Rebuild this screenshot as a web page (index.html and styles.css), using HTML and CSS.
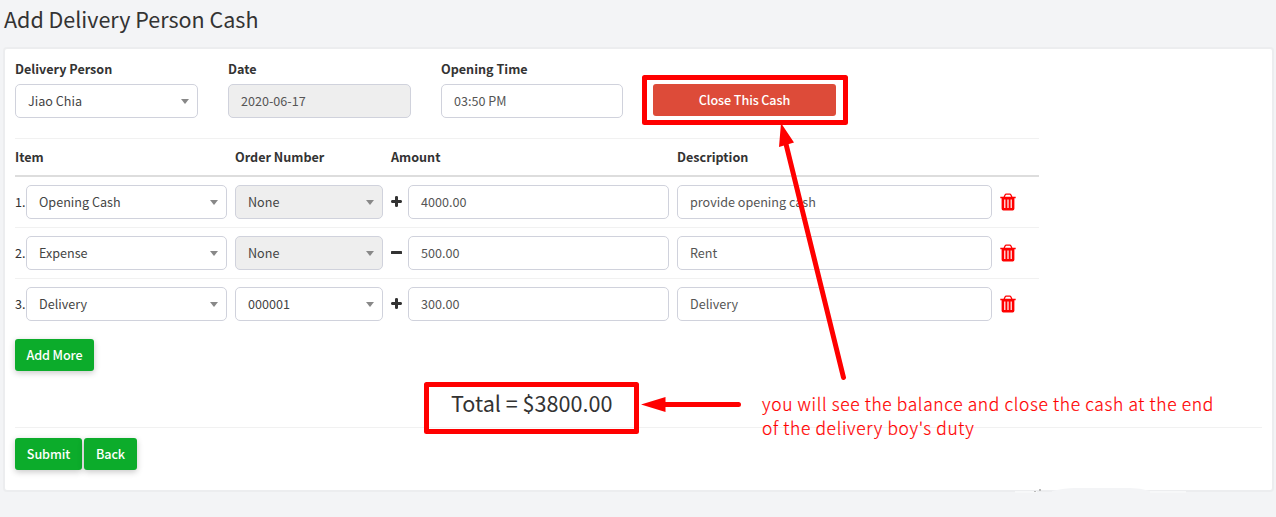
FILE: index.html
```
<!DOCTYPE html>
<html lang="en">
<head>
<meta charset="utf-8">
<title>Add Delivery Person Cash</title>
<link rel="stylesheet" href="styles.css">
</head>
<body>
<svg width="0" height="0" class="defs">
  <symbol id="trash" viewBox="0 0 16 18">
    <path d="M.3 4.500h15.400M4 4.200L5.200 1.800Q5.500 1.200 6.200 1.200H9.800Q10.500 1.200 10.800 1.800L12 4.200" fill="none" stroke="currentColor" stroke-width="1.300"/>
    <path fill="currentColor" fill-rule="evenodd" d="M1.600 4.500h12.800v11.200q0 1.700-1.700 1.700H3.300q-1.700 0-1.700-1.700ZM4.200 6.500v8.500h1.200V6.500ZM7.400 6.500v8.500h1.200V6.500ZM10.600 6.500v8.500h1.200V6.500Z"/>
  </symbol>
  <symbol id="plus" viewBox="0 0 11 11"><path d="M5.5 .6v9.800M.6 5.500h9.800" stroke="currentColor" stroke-width="3"/><path d="M5.5 1v9M1 5.500h9" stroke="currentColor" stroke-width="2" stroke-linecap="round"/></symbol>
  <symbol id="minus" viewBox="0 0 11 11"><rect y="4" width="11" height="3" rx=".6" fill="currentColor"/></symbol>
</svg>
<h1 class="title">Add Delivery Person Cash</h1>
<main class="card">
  <div class="fields">
    <div class="field"><label class="label">Delivery Person</label><div class="box select">Jiao Chia</div></div>
    <div class="field"><label class="label">Date</label><div class="box disabled value">2020-06-17</div></div>
    <div class="field"><label class="label">Opening Time</label><div class="box value">03:50 PM</div></div>
    <button class="btn danger">Close This Cash</button>
  </div>
  <section class="items">
    <div class="row head"><span>Item</span><span>Order Number</span><span>Amount</span><span>Description</span></div>
    <div class="row">
      <div class="cell"><span class="num">1.</span><div class="box select">Opening Cash</div></div>
      <div class="box select disabled">None</div>
      <div class="cell"><svg class="sign"><use href="#plus"/></svg><div class="box value">4000.00</div></div>
      <div class="box value">provide opening cash</div>
      <svg class="trash"><use href="#trash"/></svg>
    </div>
    <div class="row">
      <div class="cell"><span class="num">2.</span><div class="box select">Expense</div></div>
      <div class="box select disabled">None</div>
      <div class="cell"><svg class="sign"><use href="#minus"/></svg><div class="box value">500.00</div></div>
      <div class="box value">Rent</div>
      <svg class="trash"><use href="#trash"/></svg>
    </div>
    <div class="row">
      <div class="cell"><span class="num">3.</span><div class="box select">Delivery</div></div>
      <div class="box select">000001</div>
      <div class="cell"><svg class="sign"><use href="#plus"/></svg><div class="box value">300.00</div></div>
      <div class="box value">Delivery</div>
      <svg class="trash"><use href="#trash"/></svg>
    </div>
  </section>
  <button class="btn add">Add More</button>
  <div class="total">Total = $3800.00</div>
  <div class="actions"><button class="btn submit">Submit</button><button class="btn back">Back</button></div>
</main>
<svg class="notes" viewBox="0 0 1276 517">
  <g fill="none" stroke="#f00" stroke-width="5" stroke-linejoin="round" stroke-linecap="round">
    <rect x="644.5" y="77.5" width="201" height="45"/>
    <rect x="426.5" y="384.5" width="210" height="47"/>
    <path d="M786 144L843.500 377.500M664 404.500H738.500"/>
  </g>
  <path fill="#f00" d="M781 123L794 142.500L779 147ZM641 404.500L665.500 397V412Z"/>
</svg>
<p class="caption">you will see the balance and close the cash at the end<br>of the delivery boy's duty</p>
<svg class="smudge" viewBox="0 0 180 8"><path d="M42 8V5Q55 2 65 2H120Q130 2 140 5V8Z" fill="#f3f4f6"/><path d="M5 5h22v2H5ZM140 5h36v2h-36Z" fill="#f7f8f9"/><path d="M29 3h2v2h-2ZM24 5h2v1h-2Z" fill="#bbb"/></svg>
</body>
</html>
```
FILE: styles.css
```
* { box-sizing: border-box; }
body {
  margin: 0;
  height: 517px;
  overflow: hidden;
  background: #f3f4f6;
  color: #333;
  font: 12.6px/20px "Noto Sans CJK SC", "Open Sans", sans-serif;
}
.defs { position: absolute; }
.title { margin: 0; padding: 4px 0 0 4px; height: 49px; font-size: 21.5px; line-height: 30px; font-weight: 400; }
.card {
  margin: 0 4px 0 5px;
  height: 441px;
  padding: 10px 10px 0;
  background: #fff;
  border-radius: 2px;
  box-shadow: 0 0 0 2px #ecedef;
}
.fields { display: flex; gap: 30px; height: 79px; }
.field { width: 183px; }
.field:nth-child(3) { width: 182px; }
.label { display: block; height: 25px; font-weight: 700; }
.box {
  flex: 1;
  height: 34px;
  padding: 0 12px;
  border: 1px solid #d0d2dc;
  border-radius: 5px;
  line-height: 32px;
  white-space: nowrap;
}
.value { color: #555; }
.disabled { background: #eee; }
.select { display: flex; align-items: center; justify-content: space-between; padding-right: 8px; color: #444; }
.select::after { content: ""; border: 4.500px solid transparent; border-top: 5px solid #888; border-bottom: 0; }
.btn {
  height: 32px;
  padding: 0;
  border: 0;
  border-radius: 3px;
  background: #0cac2b;
  color: #fff;
  font: 500 12.6px/32px "Noto Sans CJK SC", sans-serif;
  letter-spacing: -.1px;
  box-shadow: 0 2px 6px rgba(0, 0, 0, .22);
}
.danger { width: 183px; margin-top: 25px; background: #dd4b39; box-shadow: none; }
.items { width: 1024px; }
.row {
  display: grid;
  grid-template-columns: 212px 148px 278px 315px 18px;
  column-gap: 8px;
  align-items: center;
  height: 51px;
  border-top: 1px solid #f1f1f1;
}
.head { height: 39px; border-bottom: 2px solid #ddd; font-weight: 700; }
.head + .row { border-top: 0; height: 50px; }
.cell { display: flex; align-items: center; }
.num { width: 11px; white-space: nowrap; }
.sign { width: 11px; height: 11px; margin: 0 6px 1px 0; }
.trash { width: 16px; height: 18px; color: #f00; }
.add { display: block; width: 79px; margin-top: 10px; }
.total { height: 57px; padding: 17px 0 0 436px; border-bottom: 1px solid #f1f1f1; font-size: 21.6px; line-height: 30px; font-weight: 400; }
.actions { display: flex; gap: 2px; margin-top: 10px; }
.submit { width: 67px; }
.back { width: 53px; }
.notes { position: absolute; left: 0; top: 0; width: 1276px; height: 517px; }
.caption { position: absolute; left: 762px; top: 392px; margin: 0; color: #f00; font: 300 17.4px/24px "Noto Sans CJK SC", sans-serif; letter-spacing: .65px; -webkit-text-stroke: .2px #f00; white-space: nowrap; }
.smudge { position: absolute; left: 1010px; top: 486px; width: 180px; height: 8px; }
```
